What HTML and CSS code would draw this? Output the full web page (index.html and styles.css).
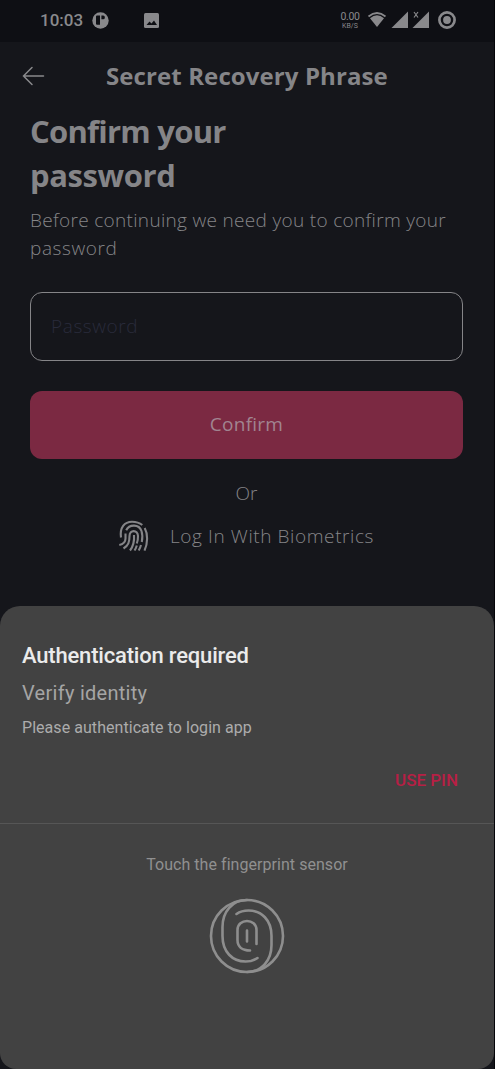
FILE: index.html
```html
<!DOCTYPE html>
<html lang="en">
<head>
<meta charset="utf-8">
<title>Secret Recovery Phrase</title>
<link rel="stylesheet" href="styles.css">
</head>
<body>
<div class="phone">
  <header class="status">
    <span class="clock">10:03</span>
    <svg class="app-dot" width="17" height="17" viewBox="0 0 17 17"><circle cx="8.500" cy="8.500" r="8.200" fill="#89898c"/><path d="M4 4.500q0-1 1-1h3v9.300H5q-1 0-1-1zM9.400 3.500h1.800q1.600 0 1.600 1.500v.8q0 1.500-1.600 1.500H9.400z" fill="#0e0f14"/></svg>
    <svg class="photo" width="15" height="15" viewBox="0 0 15 15"><rect width="15" height="15" rx="1.500" fill="#89898c"/><path d="M2.500 12l3-3.500 2 2L10 7.500l3 4.500z" fill="#0e0f14"/></svg>
    <span class="speed"><span class="rate">0.00</span><span class="unit">KB/S</span></span>
    <svg class="signals" width="120" height="24" viewBox="0 0 120 24" fill="#89898c">
      <path d="M1.500 8.500Q10 1.500 18.500 8.500" fill="none" stroke="#89898c" stroke-width="1.700"/>
      <path d="M3 10.300Q10 4 17 10.300L10 19z"/>
      <path d="M41 3.500v16.500H24.500zM62 3.500v16.500H45.500z"/>
      <path d="M47 4l4 5.500M51 4l-4 5.500" stroke="#89898c" stroke-width="1.200"/>
      <circle cx="80" cy="12" r="7.600" fill="none" stroke="#89898c" stroke-width="2.700"/><circle cx="80" cy="12" r="3.900"/>
    </svg>
  </header>
  <nav class="bar">
    <svg class="back" width="24" height="20" viewBox="0 0 24 20"><path d="M10 1.500L1.500 10l8.500 8.500M1.500 10h20" fill="none" stroke="#89898c" stroke-width="1.500" stroke-linecap="round"/></svg>
    <span class="bar-title">Secret Recovery Phrase</span>
  </nav>
  <main class="form">
    <h1 class="heading"><span class="h-one">Confirm your</span><br><span class="h-two">password</span></h1>
    <p class="intro"><span class="i-one">Before continuing we need you to confirm your</span><br><span class="i-two">password</span></p>
    <div class="field">Password</div>
    <div class="button">Confirm</div>
    <div class="or">Or</div>
    <div class="bio">
      <svg width="32" height="34" viewBox="0 0 32 34" fill="none" stroke="#858588" stroke-width="2.100">
        <path d="M3 18.500C1.500 8.500 6.500 2.700 14 2.700c4.500 0 7.500 1 10.300 3.300"/>
        <path d="M26.700 9c3.300 6 3.200 15-.2 22.700"/>
        <path d="M8.200 11.300c3-6.300 12.800-6.500 15.300.7 1 3 1 7.500.3 11"/>
        <path d="M1.300 26c4.700-1 6.200-3.500 6.200-6.500v-5"/>
        <path d="M5.500 29.500c5-3 6-6.500 6-12.500 0-6.500 8.300-6.500 8.500 0q.1 4-1.200 7.500"/>
        <path d="M12 31.500c3.500-4.500 4.500-9 4-15.500"/>
        <path d="M18.800 26.500q-.8 2.800-2.300 5M23 26q-.8 3-2.300 5.500"/>
      </svg>
      <span class="bio-text">Log In With Biometrics</span>
    </div>
  </main>
  <section class="sheet">
    <h2 class="auth">Authentication required</h2>
    <p class="verify">Verify identity</p>
    <p class="please">Please authenticate to login app</p>
    <div class="pin">USE PIN</div>
    <div class="sensor">
      <p class="touch">Touch the fingerprint sensor</p>
      <svg width="76" height="76" viewBox="0 0 76 76" fill="none" stroke="#8e8e8e" stroke-width="2.600" stroke-linecap="round">
        <circle cx="38" cy="38" r="36"/>
        <path d="M38 2C23 2 13.500 14 13.500 29v9c0 16 10 25.500 23 25.500q7 0 12-3.500"/>
        <path d="M38 74C53 74 62.500 62 62.500 47v-9c0-16-10-25.500-23-25.500q-7 0-12 3.500"/>
        <path d="M47.500 46V32c0-12-19-12-19 0v10c0 6.500 4.500 10.500 12.500 10.500M38 32.500v11"/>
      </svg>
    </div>
  </section>
</div>
</body>
</html>
```
FILE: styles.css
```css
* { box-sizing: border-box; }
body { margin: 0; background: #050509; }
h1, h2, p { margin: 0; }
.phone { width: 494px; height: 1069px; display: flex; flex-direction: column; background: #15161b; font-family: "Open Sans", "Noto Sans", sans-serif; color: #858588; white-space: nowrap; overflow: hidden; }
.status { height: 42px; flex: none; display: flex; padding-left: 40px; background: #0e0f14; font-family: Roboto, sans-serif; color: #89898c; }
.clock { width: 52px; font-size: 17px; line-height: 40px; font-weight: 500; }
.app-dot { margin-top: 12px; }
.photo { margin: 13px 0 0 35px; }
.speed { width: 20px; margin: 11px 0 0 181px; display: flex; flex-direction: column; align-items: center; }
.rate { font-size: 10.500px; line-height: 11px; letter-spacing: -0.400px; }
.unit { font-size: 7px; line-height: 8px; }
.signals { margin: 8px 0 0 7px; }
.bar { height: 68px; flex: none; display: flex; align-items: center; padding-left: 22px; }
.bar-title { margin-left: 60px; font-size: 24px; font-weight: 700; line-height: 66px; letter-spacing: 0.100px; }
.form { padding: 0 31px 0 30px; flex: none; height: 496px; }
.heading { font-size: 31px; line-height: 43.500px; font-weight: 700; }
.h-one { letter-spacing: -0.750px; }
.h-two { letter-spacing: -0.400px; }
.intro { margin-top: 9px; font-size: 19px; line-height: 28px; font-weight: 300; }
.i-one { letter-spacing: 0.320px; }
.i-two { letter-spacing: 0.600px; }
.field { height: 69px; margin-top: 30px; padding-left: 20px; border: 1px solid #858588; border-radius: 12px; font-size: 19px; font-weight: 300; line-height: 67px; letter-spacing: 0.600px; color: #292b3b; }
.button { height: 68px; margin-top: 30px; border-radius: 12px; background: #7b2942; text-align: center; font-size: 19px; line-height: 67px; letter-spacing: 0.250px; color: #a18490; }
.or { margin-top: 20px; text-align: center; font-size: 19px; font-weight: 300; line-height: 28px; }
.bio { margin: 12px 0 0 88px; display: flex; align-items: center; gap: 20px; font-size: 19px; font-weight: 300; line-height: 34px; letter-spacing: 0.600px; }
.sheet { height: 463px; flex: none; padding-top: 34px; border-radius: 20px 20px 16px 16px; background: #424242; font-family: Roboto, sans-serif; }
.auth { padding-left: 22px; font-size: 22px; line-height: 31px; font-weight: 500; letter-spacing: -0.190px; color: #ebebeb; }
.verify { padding-left: 22px; margin-top: 7px; font-size: 20px; line-height: 30px; letter-spacing: 0.280px; color: #a5a5a5; }
.please { padding-left: 22px; margin-top: 8px; font-size: 16px; line-height: 24px; letter-spacing: 0.050px; color: #acacac; }
.pin { margin: 29px 36px 0 0; text-align: right; font-size: 17px; line-height: 23px; font-weight: 500; color: #b71f45; }
.sensor { margin-top: 31px; padding-top: 29px; border-top: 1px solid #565656; display: flex; flex-direction: column; align-items: center; }
.touch { font-size: 16px; line-height: 24px; letter-spacing: 0.050px; color: #909090; }
.sensor svg { margin-top: 21px; }
```
